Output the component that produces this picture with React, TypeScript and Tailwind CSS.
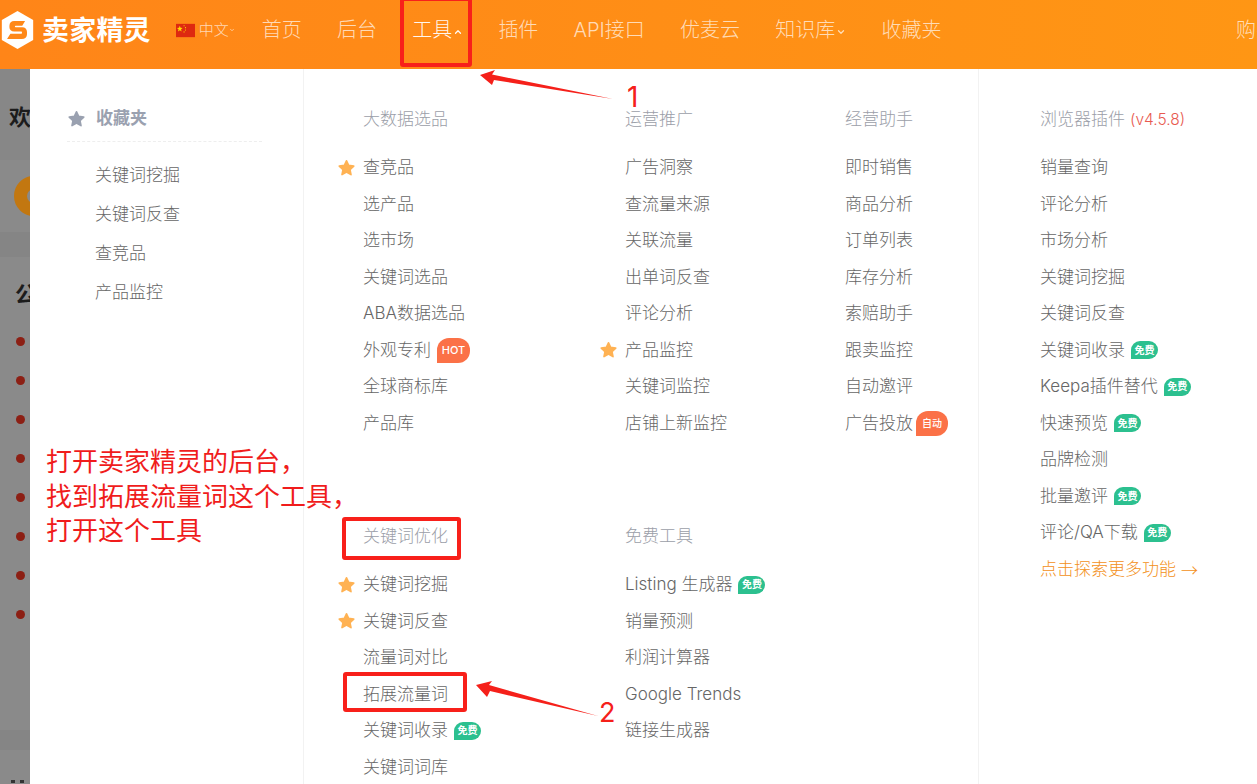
import React from 'react';
import { ChevronDown, ChevronUp } from 'lucide-react';

type MenuItem = { label: string; star?: boolean; badge?: 'free' | 'hot' | 'auto' };

const navItems = [
  { label: '首页' },
  { label: '后台' },
  { label: '工具', open: true },
  { label: '插件' },
  { label: 'API接口' },
  { label: '优麦云' },
  { label: '知识库', caret: true },
  { label: '收藏夹' },
];

const favourites = ['关键词挖掘', '关键词反查', '查竞品', '产品监控'];

const bigData: MenuItem[] = [
  { label: '查竞品', star: true },
  { label: '选产品' },
  { label: '选市场' },
  { label: '关键词选品' },
  { label: 'ABA数据选品' },
  { label: '外观专利', badge: 'hot' },
  { label: '全球商标库' },
  { label: '产品库' },
];
const promotion: MenuItem[] = [
  { label: '广告洞察' },
  { label: '查流量来源' },
  { label: '关联流量' },
  { label: '出单词反查' },
  { label: '评论分析' },
  { label: '产品监控', star: true },
  { label: '关键词监控' },
  { label: '店铺上新监控' },
];
const assistant: MenuItem[] = [
  { label: '即时销售' },
  { label: '商品分析' },
  { label: '订单列表' },
  { label: '库存分析' },
  { label: '索赔助手' },
  { label: '跟卖监控' },
  { label: '自动邀评' },
  { label: '广告投放', badge: 'auto' },
];
const keywordOpt: MenuItem[] = [
  { label: '关键词挖掘', star: true },
  { label: '关键词反查', star: true },
  { label: '流量词对比' },
  { label: '拓展流量词' },
  { label: '关键词收录', badge: 'free' },
  { label: '关键词词库' },
];
const freeTools: MenuItem[] = [
  { label: 'Listing 生成器', badge: 'free' },
  { label: '销量预测' },
  { label: '利润计算器' },
  { label: 'Google Trends' },
  { label: '链接生成器' },
];
const plugin: MenuItem[] = [
  { label: '销量查询' },
  { label: '评论分析' },
  { label: '市场分析' },
  { label: '关键词挖掘' },
  { label: '关键词反查' },
  { label: '关键词收录', badge: 'free' },
  { label: 'Keepa插件替代', badge: 'free' },
  { label: '快速预览', badge: 'free' },
  { label: '品牌检测' },
  { label: '批量邀评', badge: 'free' },
  { label: '评论/QA下载', badge: 'free' },
];

function StarIcon({ className }: { className: string }) {
  return (
    <svg viewBox="0 0 24 24" className={className} fill="currentColor" stroke="currentColor" strokeWidth={2.4} strokeLinejoin="round">
      <path d="M12 2.5l3 6.6 7.2 0.9-5.3 4.9 1.4 7.1L12 18.5l-6.3 3.5 1.4-7.1L1.8 10 9 9.1z" />
    </svg>
  );
}

function Badge({ type }: { type: 'free' | 'hot' | 'auto' }) {
  if (type === 'free') {
    return (
      <span className="ml-1.5 flex h-[18px] w-[27px] items-center justify-center rounded-[9px] rounded-bl-none bg-[#2cc08f] text-[10px] font-bold text-white">
        免费
      </span>
    );
  }
  if (type === 'hot') {
    return (
      <span className="ml-1.5 flex h-[25px] w-[33px] items-center justify-center rounded-[12px] rounded-bl-none bg-[#fb7147] text-[11px] font-medium text-white">
        HOT
      </span>
    );
  }
  return (
    <span className="ml-[3px] flex h-[25px] w-[32px] items-center justify-center rounded-[12px] rounded-bl-none bg-[#fb7147] text-[10px] font-medium text-white">
      自动
    </span>
  );
}

function Row({ item }: { item: MenuItem }) {
  return (
    <div className="relative flex h-[36.5px] items-center">
      {item.star && <StarIcon className="absolute left-[-25px] top-[9px] h-[17px] w-[17px] text-[#ffb253]" />}
      <span>{item.label}</span>
      {item.badge && <Badge type={item.badge} />}
    </div>
  );
}

function Section({ title, items }: { title: string; items: MenuItem[] }) {
  return (
    <div>
      <div className="mb-[11.5px] flex h-9 items-center text-[#9b9ea8]">{title}</div>
      {items.map((item) => (
        <Row key={item.label} item={item} />
      ))}
    </div>
  );
}

function Logo() {
  return (
    <div className="flex items-center">
      <svg viewBox="0 0 34 40" className="h-[38px] w-[33px]">
        <path d="M17 0L33.5 9.5V30.5L17 40L0.5 30.5V9.5Z" fill="#fff" />
        <path
          d="M25 10.5H13.5C10.5 10.5 8.5 12.5 8.5 15.5V17C8.5 19.5 10.5 21.5 13.5 21.5H21C22 21.5 22 24 21 24H9.5L6 29.5H21.5C25 29.5 27 27.5 27 24.5V22C27 19 25 17 22 17H15C14 17 14 15.5 15 15.5H22Z"
          fill="#ff8818"
        />
      </svg>
      <span className="ml-[8px] text-[27px] leading-none font-bold tracking-[0.2px] text-white">卖家精灵</span>
    </div>
  );
}

function Flag() {
  return (
    <svg viewBox="0 0 20 14" className="h-[15px] w-[19px]">
      <rect width="20" height="14" fill="#de2910" />
      <path d="M4 2l.8 2.2L7 4.4 5.3 5.8l.6 2.2L4 6.8 2.1 8l.6-2.2L1 4.4l2.2-.2z" fill="#ffde00" />
      <circle cx="8.5" cy="2" r=".6" fill="#ffde00" />
      <circle cx="10" cy="4" r=".6" fill="#ffde00" />
      <circle cx="10" cy="6.5" r=".6" fill="#ffde00" />
      <circle cx="8.5" cy="8.5" r=".6" fill="#ffde00" />
    </svg>
  );
}

export default function App() {
  return (
    <div
      className="relative flex h-[784px] w-[1257px] flex-col overflow-hidden bg-white font-light"
      style={{ fontFamily: 'Inter, "Noto Sans CJK SC", "Noto Sans", sans-serif' }}
    >
      {/* top bar */}
      <header className="flex h-[69px] shrink-0 items-center bg-gradient-to-r from-[#ff8518] to-[#ff9614] pb-[9px] pl-px">
        <Logo />
        <div className="ml-[25px] flex w-[86px] items-center text-[15px] text-white/70">
          <Flag />
          <span className="ml-1">中文</span>
          <ChevronDown className="h-[6px] w-[6px]" strokeWidth={3} />
        </div>
        <nav className="flex gap-[35.2px] text-[20px] text-white/70">
          {navItems.map((item) => (
            <div key={item.label} className={`flex items-center ${item.open ? 'text-white/95' : ''}`}>
              <span>{item.label}</span>
              {item.open && <ChevronUp className="ml-px mt-[3px] h-[10px] w-[10px]" strokeWidth={3} />}
              {item.caret && <ChevronDown className="ml-px mt-[3px] h-[10px] w-[10px]" strokeWidth={3} />}
            </div>
          ))}
        </nav>
        <span className="ml-auto w-[21px] shrink-0 overflow-hidden whitespace-nowrap text-[20px] text-white/70">购买</span>
      </header>

      <div className="flex min-h-0 flex-1">
        {/* dimmed page behind the menu */}
        <div className="flex w-[30px] shrink-0 flex-col overflow-hidden bg-[#8a8a8a]">
          <div className="h-[91px] shrink-0 bg-[#878787] pl-[9px] pt-[33px] text-[22px] leading-[30px] font-bold whitespace-nowrap text-[#1c1c1c]">
            欢迎
          </div>
          <div className="h-[72px] shrink-0 pl-[14px] pt-[16px]">
            <div className="h-10 w-10 rounded-full border-[13px] border-[#c27710] bg-[#8a8a8a]" />
          </div>
          <div className="h-[25px] shrink-0 bg-[#858585]" />
          <div className="shrink-0 pl-[15px] pt-[22px] text-[22px] leading-[30px] font-bold whitespace-nowrap text-[#1c1c1c]">公告</div>
          <div className="ml-[16px] mt-[28px] flex flex-col gap-[30px]">
            {[0, 1, 2, 3, 4, 5, 6, 7].map((i) => (
              <span key={i} className="h-[9px] w-[9px] rounded-full bg-[#8c1f14]" />
            ))}
          </div>
          <div className="mt-[111px] h-5 shrink-0 bg-[#858585]" />
          <div className="ml-[11px] mt-[30px] flex shrink-0 gap-[5px]">
            <span className="h-[3px] w-[4px] bg-[#333]" />
            <span className="h-[3px] w-[4px] bg-[#333]" />
          </div>
        </div>

        {/* favourites column */}
        <div className="w-[274px] shrink-0 border-r border-[#f2f2f2] pl-[37px] pt-[33px] text-[17px] text-[#666]">
          <div className="flex h-10 w-[195px] items-center border-b border-dashed border-[#eeeeee] pb-[6px] pl-px font-bold text-[#9aa1b0]">
            <StarIcon className="h-[17px] w-[17px] text-[#9aa1b0]" />
            <span className="ml-[11px]">收藏夹</span>
          </div>
          <div className="mt-[14.5px] pl-[28px]">
            {favourites.map((label) => (
              <div key={label} className="flex h-[39px] items-center">
                {label}
              </div>
            ))}
          </div>
        </div>

        {/* tool columns */}
        <div className="w-[675px] shrink-0 border-r border-[#f2f2f2] pl-[59px] pt-[33px] text-[17px] text-[#666]">
          <div className="grid grid-cols-[262px_220px_1fr]">
            <Section title="大数据选品" items={bigData} />
            <Section title="运营推广" items={promotion} />
            <Section title="经营助手" items={assistant} />
          </div>
          <div className="mt-[77.5px] grid grid-cols-[262px_220px_1fr]">
            <Section title="关键词优化" items={keywordOpt} />
            <Section title="免费工具" items={freeTools} />
          </div>
        </div>

        {/* browser plugin column */}
        <div className="min-w-0 flex-1 pl-[61px] pt-[33px] text-[17px] text-[#666]">
          <div className="mb-[11.5px] flex h-9 items-center text-[#9b9ea8]">
            浏览器插件<span className="ml-[5px] text-[15.5px] text-[#e85a50]">(v4.5.8)</span>
          </div>
          {plugin.map((item) => (
            <Row key={item.label} item={item} />
          ))}
          <div className="flex h-[36.5px] items-center whitespace-nowrap text-[#f39020]">
            点击探索更多功能<span className="ml-[5px] font-['Noto_Sans_CJK_SC']">→</span>
          </div>
        </div>
      </div>

      {/* red tutorial annotations drawn on top of the screenshot */}
      <div className="absolute left-[400px] top-[-3px] h-[70px] w-[72px] rounded-[3px] border-4 border-[#f8201a]" />
      <div className="absolute left-[342px] top-[517px] h-[43px] w-[119px] rounded-[3px] border-4 border-[#f8201a]" />
      <div className="absolute left-[343px] top-[672px] h-[40px] w-[124px] rounded-[3px] border-4 border-[#f8201a]" />
      <svg className="absolute left-[470px] top-[65px] h-[40px] w-[150px]" viewBox="470 65 150 40">
        <polygon points="480,75 495,70 492,74.5 613,99 494,80 492,85" fill="#f5201a" />
      </svg>
      <svg className="absolute left-[470px] top-[675px] h-[45px] w-[135px]" viewBox="470 675 135 45">
        <polygon points="476,685 492,681 489,685 598,716 490,691 487,697" fill="#f5201a" />
      </svg>
      <span className="absolute left-[627px] top-[79px] text-[28px] leading-9 font-normal text-[#f5201a]">1</span>
      <span className="absolute left-[599px] top-[695px] text-[27px] leading-9 font-normal text-[#f5201a]">2</span>
      <div className="absolute left-[46px] top-[445px] text-[26px] leading-[34.5px] font-normal whitespace-nowrap text-[#f01c1c]">
        打开卖家精灵的后台，
        <br />
        找到拓展流量词这个工具，
        <br />
        打开这个工具
      </div>
    </div>
  );
}
